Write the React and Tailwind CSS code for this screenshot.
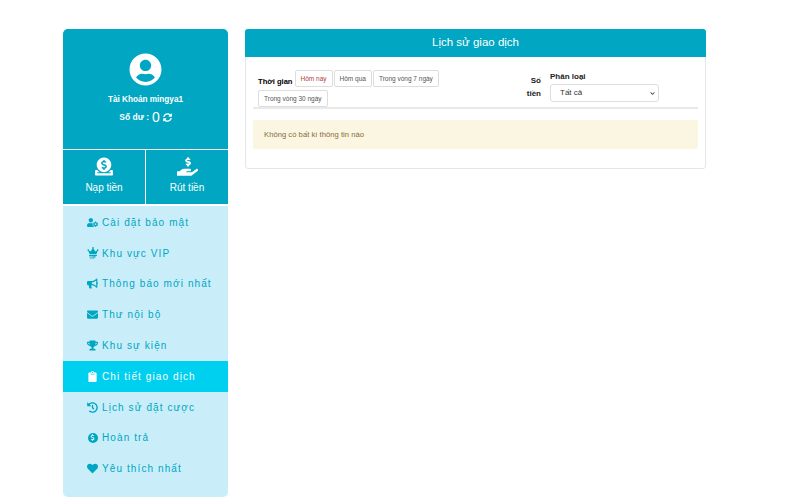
import React from 'react';
import {
  FaUserCircle, FaSyncAlt, FaDonate, FaHandHoldingUsd, FaUserCog, FaCrown, FaBullhorn,
  FaEnvelope, FaTrophy, FaClipboard, FaHistory, FaDollarSign, FaHeart, FaChevronDown,
} from 'react-icons/fa';

const menuItems = [
  { label: 'Cài đặt bảo mật', icon: <FaUserCog className="w-[12px] h-[11px]" /> },
  {
    label: 'Khu vực VIP',
    icon: (
      <span className="flex flex-col items-center font-bold tracking-normal text-[4px] leading-[4px]">
        <FaCrown className="w-[12px] h-[9px]" />
        VIP
      </span>
    ),
  },
  { label: 'Thông báo mới nhất', icon: <FaBullhorn className="w-[12px] h-[11px]" /> },
  { label: 'Thư nội bộ', icon: <FaEnvelope className="w-[11px] h-[11px]" /> },
  { label: 'Khu sự kiện', icon: <FaTrophy className="w-[12px] h-[11px]" /> },
  { label: 'Chi tiết giao dịch', icon: <FaClipboard className="w-[9px] h-[11px]" />, active: true },
  { label: 'Lịch sử đặt cược', icon: <FaHistory className="w-[11px] h-[11px]" /> },
  {
    label: 'Hoàn trả',
    icon: (
      <span className="w-[10px] h-[10px] rounded-full bg-[#00a6c2] flex items-center justify-center text-[#c9eef9]">
        <FaDollarSign className="w-[7px] h-[7px]" />
      </span>
    ),
  },
  { label: 'Yêu thích nhất', icon: <FaHeart className="w-[11px] h-[11px]" /> },
];

const ranges = ['Hôm nay', 'Hôm qua', 'Trong vòng 7 ngày', 'Trong vòng 30 ngày'];

function App() {
  return (
    <div className="min-h-screen bg-white pt-[29px] pl-[63px] flex items-start gap-[17px] font-['Liberation_Sans',Arial,sans-serif]">
      <aside className="w-[165px] h-[468px] rounded-[5px] overflow-hidden bg-[#c9eef9] flex flex-col">
        <div className="h-[120px] bg-[#00a6c2] flex flex-col items-center text-white pt-[24px]">
          <FaUserCircle className="w-[33px] h-[33px]" />
          <p className="mt-[8px] text-[8.2px] leading-[12px] font-bold">Tài Khoản mingya1</p>
          <p className="mt-[4px] flex items-center gap-[3px] text-[8.5px] leading-[14px] font-bold">
            Số dư :<span className="text-[14px] font-normal">0</span>
            <FaSyncAlt className="w-[9px] h-[9px]" />
          </p>
        </div>
        <div className="h-[57px] flex border-t border-b-2 border-white bg-[#00a6c2] text-white">
          <button className="w-[83px] flex flex-col items-center pt-[7px] border-r border-white">
            <FaDonate className="w-[18px] h-[19px]" />
            <span className="mt-[5px] text-[10px] leading-[14px]">Nạp tiền</span>
          </button>
          <button className="flex-1 flex flex-col items-center pt-[7px]">
            <FaHandHoldingUsd className="w-[21px] h-[19px]" />
            <span className="mt-[5px] text-[10px] leading-[14px]">Rút tiền</span>
          </button>
        </div>
        <nav className="pt-[1px] flex flex-col">
          {menuItems.map((item) => (
            <div
              key={item.label}
              className={`h-[30.8px] pl-[24px] flex items-center gap-[4px] text-[10px] tracking-[1.1px] ${item.active ? 'bg-[#00d0f0] text-white' : 'text-[#00a6c2]'}`}
            >
              <span className="w-[11px] flex justify-center">{item.icon}</span>
              <span>{item.label}</span>
            </div>
          ))}
        </nav>
      </aside>

      <main className="w-[461px] h-[140px] rounded-[3px] border border-[#e6e6e6] bg-white">
        <div className="h-[28px] -mx-px -mt-px rounded-t-[3px] bg-[#00a6c2] text-white text-[11.5px] flex items-center justify-center">
          Lịch sử giao dịch
        </div>
        <div className="px-[7px]">
          <div className="pt-[13px] flex h-[52px] border-b-2 border-[#e9e9e9]">
            <div className="w-[250px] pl-[5px] leading-[17px]">
              <span className="text-[7.6px] font-bold text-black mr-[2px]">Thời gian</span>
              {ranges.map((range, i) => (
                <button
                  key={range}
                  className={`h-[17px] px-[5px] border border-[#ddd] rounded-[2px] align-top text-[6.5px] leading-[15px] mr-px ${i === 0 ? 'text-[#b04040]' : 'text-[#555]'}`}
                >
                  {range}
                </button>
              ))}
            </div>
            <div className="w-[38px] pt-[4px] text-right text-[8px] leading-[13px] font-bold text-[#222]">
              Số<br />tiền
            </div>
            <div className="ml-[9px] pt-[2px] text-[8px]">
              <div className="font-bold leading-[10px] text-[#222]">Phân loại</div>
              <div className="relative mt-[2px] w-[109px]">
                <select className="appearance-none w-full h-[18px] border border-[#ddd] rounded-[3px] pl-[9px] text-[8px] text-[#333] bg-white">
                  <option>Tất cả</option>
                </select>
                <FaChevronDown className="absolute right-[4px] top-[7px] w-[5px] h-[5px] text-[#333]" />
              </div>
            </div>
          </div>
          <div className="mt-[11px] h-[29px] rounded-[2px] bg-[#fbf6e2] text-[#8a6d3b] text-[7.7px] flex items-center pl-[11px]">
            Không có bất kì thông tin nào
          </div>
        </div>
      </main>
    </div>
  );
}

export default App;
